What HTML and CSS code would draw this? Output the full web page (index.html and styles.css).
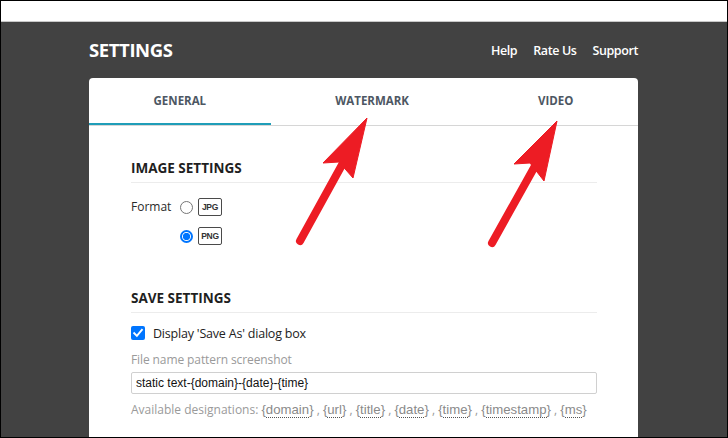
FILE: index.html
```html
<!DOCTYPE html>
<html>
<head>
<meta charset="utf-8">
<link rel="stylesheet" href="styles.css">
</head>
<body>
<div class="frame">
  <div class="topbar"></div>
  <div class="main">
    <header class="header">
      <h1 class="title">SETTINGS</h1>
      <nav class="nav">
        <a class="nav-link">Help</a>
        <a class="nav-link">Rate Us</a>
        <a class="nav-link">Support</a>
      </nav>
    </header>
    <div class="card">
      <div class="tabs">
        <div class="tab active">GENERAL</div>
        <div class="tab">WATERMARK</div>
        <div class="tab">VIDEO</div>
      </div>
      <div class="content">
        <h2 class="section-title">IMAGE SETTINGS</h2>
        <div class="format-row">
          <span class="format-label">Format</span>
          <div class="options">
            <div class="option"><span class="radio"></span><span class="badge">JPG</span></div>
            <div class="option"><span class="radio checked"></span><span class="badge">PNG</span></div>
          </div>
        </div>
        <h2 class="section-title second">SAVE SETTINGS</h2>
        <div class="check-row">
          <span class="checkbox"><svg width="14" height="14" viewBox="0 0 14 14"><path d="M3.2 7.2 L5.9 9.9 L10.9 3.9" fill="none" stroke="#fff" stroke-width="1.9" stroke-linecap="square"/></svg></span>
          <span class="check-label">Display 'Save As' dialog box</span>
        </div>
        <div class="field-label">File name pattern screenshot</div>
        <div class="input">static text-{domain}-{date}-{time}</div>
        <div class="hint">Available designations: <span class="tok">{<u>domain</u>}</span> , <span class="tok">{<u>url</u>}</span> , <span class="tok">{<u>title</u>}</span> , <span class="tok">{<u>date</u>}</span> , <span class="tok">{<u>time</u>}</span> , <span class="tok">{<u>timestamp</u>}</span> , <span class="tok">{<u>ms</u>}</span></div>
      </div>
    </div>
  </div>
  <svg class="arrows" width="728" height="438" viewBox="0 0 728 438">
    <g fill="#ed1c24" stroke="#ed1c24">
      <line x1="300" y1="241" x2="343" y2="163" stroke-width="8" stroke-linecap="round"/>
      <polygon points="367,118 323,163 339,162 353,178" stroke-width="1" stroke-linejoin="round"/>
      <line x1="492" y1="243" x2="535" y2="166" stroke-width="8" stroke-linecap="round"/>
      <polygon points="557,121 514,164 530,163 544,181" stroke-width="1" stroke-linejoin="round"/>
    </g>
  </svg>
</div>
</body>
</html>
```
FILE: styles.css
```css
* { box-sizing: border-box; }
html, body { margin: 0; padding: 0; }
body { font-family: "Open Sans", "Liberation Sans", sans-serif; }
.frame {
  position: relative;
  width: 728px;
  height: 438px;
  border: 1px solid #000;
  overflow: hidden;
  background: #424242;
}
.topbar {
  height: 21px;
  background: #fff;
  border-bottom: 1px solid #c8c8c8;
}
.main {
  padding: 0 89px 0 88px;
}
.header {
  height: 56px;
  display: flex;
  align-items: center;
  justify-content: space-between;
}
.title {
  margin: 0;
  color: #fff;
  font-size: 18.5px;
  font-weight: 700;
  letter-spacing: -0.4px;
  line-height: 20px;
}
.nav { display: flex; gap: 16px; }
.nav-link {
  color: #fff;
  font-size: 12.5px;
  font-weight: 600;
  letter-spacing: -0.4px;
}
.card {
  background: #fff;
  border-radius: 4px 4px 0 0;
  height: 400px;
}
.tabs {
  display: flex;
  border-bottom: 1px solid #d6d6d6;
}
.tab {
  flex: 1 1 auto;
  text-align: center;
  height: 47px;
  padding-top: 15px;
  font-size: 11.5px;
  line-height: 16px;
  font-weight: 700;
  color: #4d5763;
  border-bottom: 2px solid transparent;
}
.tab.active { border-bottom-color: #1f9db8; }
.content {
  padding: 32px 41px 0 42px;
}
.section-title {
  margin: 0;
  font-size: 13.5px;
  line-height: 20px;
  font-weight: 700;
  color: #1f1f1f;
  padding-bottom: 4px;
  border-bottom: 1px solid #ececec;
}
.section-title.second { margin-top: 43px; }
.format-row {
  display: flex;
  align-items: flex-start;
  margin-top: 15px;
}
.format-label {
  font-size: 12px;
  color: #2a2a2a;
  line-height: 18px;
  width: 49px;
}
.options { display: flex; flex-direction: column; gap: 11px; }
.option { display: flex; align-items: center; gap: 5px; }
.radio {
  width: 13px;
  height: 13px;
  border-radius: 50%;
  border: 1px solid #767676;
  background: #fff;
}
.radio.checked {
  border: 2px solid #0075ff;
  background: radial-gradient(circle, #0075ff 0 3.4px, #fff 3.9px);
}
.badge {
  width: 24px;
  height: 18px;
  border: 1px solid #4a4a4a;
  border-radius: 2px;
  font-family: "Liberation Sans", Arial, sans-serif;
  font-size: 8.5px;
  font-weight: 700;
  color: #333;
  display: flex;
  align-items: center;
  justify-content: center;
  letter-spacing: -0.3px;
}
.check-row {
  display: flex;
  align-items: center;
  gap: 8px;
  margin-top: 11px;
  height: 18px;
}
.checkbox {
  width: 14px;
  height: 14px;
  background: #0075ff;
  border-radius: 2px;
  display: flex;
}
.check-label {
  font-size: 12.5px;
  color: #222;
  letter-spacing: -0.2px;
}
.field-label {
  margin-top: 10px;
  font-size: 12px;
  line-height: 16px;
  color: #9a9a9a;
  letter-spacing: -0.1px;
}
.input {
  margin-top: 4px;
  height: 22px;
  border: 1px solid #d0d0d0;
  border-radius: 2px;
  padding: 0 4px;
  font-family: "Liberation Sans", Arial, sans-serif;
  font-size: 12px;
  line-height: 20px;
  color: #111;
}
.hint {
  margin-top: 7px;
  font-size: 12px;
  line-height: 17px;
  color: #9a9a9a;
}
.tok {
  font-family: "Liberation Sans", Arial, sans-serif;
  font-size: 13.2px;
  color: #8a8a8a;
}
.tok u {
  text-decoration: none;
  border-bottom: 1px dotted #555;
}
.arrows {
  position: absolute;
  left: -1px;
  top: -1px;
  pointer-events: none;
}
```
